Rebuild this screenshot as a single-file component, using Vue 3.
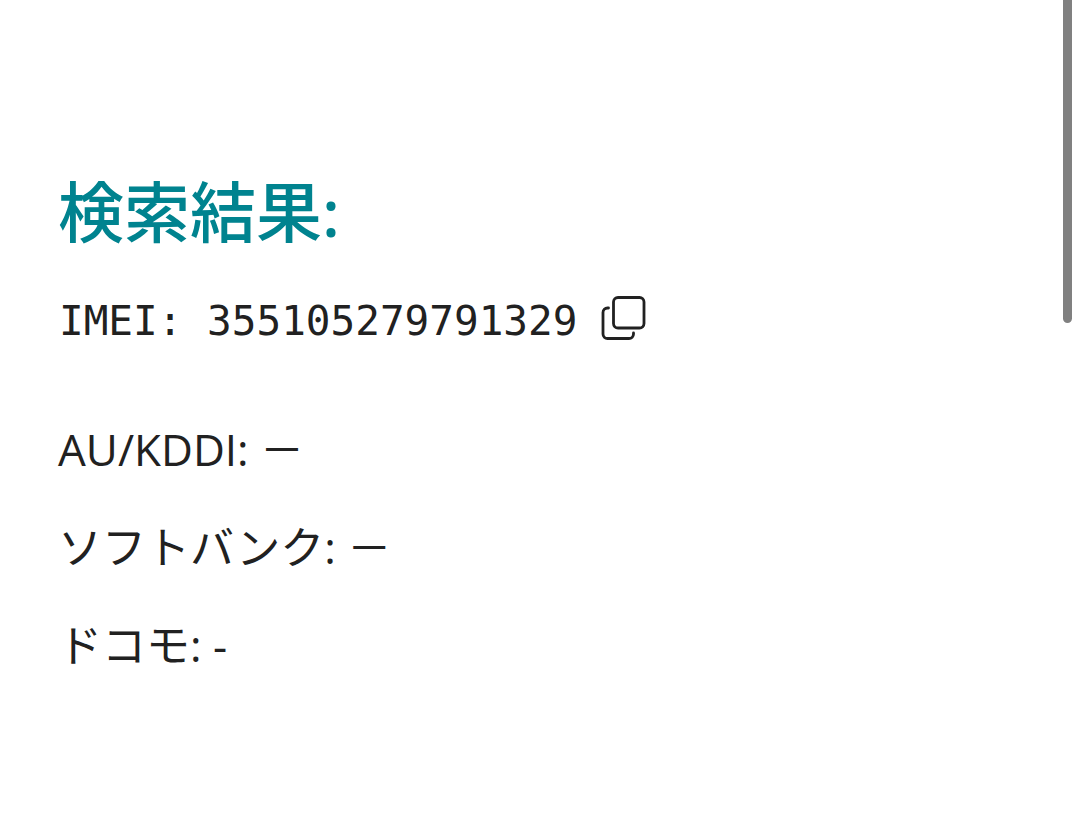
<script setup>
import { ref } from 'vue'

const imei = ref('355105279791329')
const carriers = [
  { name: 'AU/KDDI', status: '－' },
  { name: 'ソフトバンク', status: '－' },
  { name: 'ドコモ', status: '-' },
]

function copyImei() {
  navigator.clipboard?.writeText(imei.value)
}
</script>

<template>
  <main class="page">
    <h1 class="title">検索結果:</h1>
    <div class="imei">
      <span>IMEI: {{ imei }}</span>
      <button class="copy" type="button" aria-label="コピー" @click="copyImei">
        <svg class="icon" viewBox="0 0 46 46" aria-hidden="true">
          <rect x="12.500" y="2.500" width="30.500" height="30.500" rx="4.500" />
          <path d="M7.500 13H6.500a4.500 4.500 0 0 0-4.500 4.500v21.500a4.500 4.500 0 0 0 4.500 4.500h21.500a4.500 4.500 0 0 0 4.500-4.500v-1" />
        </svg>
      </button>
    </div>
    <p v-for="c in carriers" :key="c.name" class="carrier">{{ c.name }}: {{ c.status }}</p>
    <div class="thumb" aria-hidden="true"></div>
  </main>
</template>

<style>
body {
  background: #fff;
}
</style>

<style scoped>
.page {
  position: relative;
  box-sizing: border-box;
  min-height: 100vh;
  padding: 163px 58px 0;
  color: #212121;
  font-family: "Open Sans", "Noto Sans CJK JP", sans-serif;
}
.title {
  margin: 0;
  color: #00838f;
  font-family: "Noto Sans", "Noto Sans CJK JP", sans-serif;
  font-size: 66px;
  font-weight: 500;
  line-height: 96px;
}
.imei {
  display: flex;
  align-items: flex-start;
  gap: 24px;
  margin: 36px 0 70px;
  padding-left: 1px;
  font-family: "DejaVu Sans Mono", monospace;
  font-size: 41px;
  line-height: 52px;
}
.copy {
  display: flex;
  padding: 0;
  border: 0;
  background: none;
  color: inherit;
  cursor: pointer;
}
.icon {
  width: 46px;
  height: 46px;
  fill: none;
  stroke: currentColor;
  stroke-width: 2.8;
  stroke-linecap: round;
}
.carrier {
  margin: 0 0 34px;
  font-size: 44px;
  line-height: 64px;
}
.thumb {
  position: absolute;
  top: 0;
  right: 8px;
  width: 9px;
  height: 323px;
  border-radius: 0 0 5px 5px;
  background: #808080;
}
</style>
